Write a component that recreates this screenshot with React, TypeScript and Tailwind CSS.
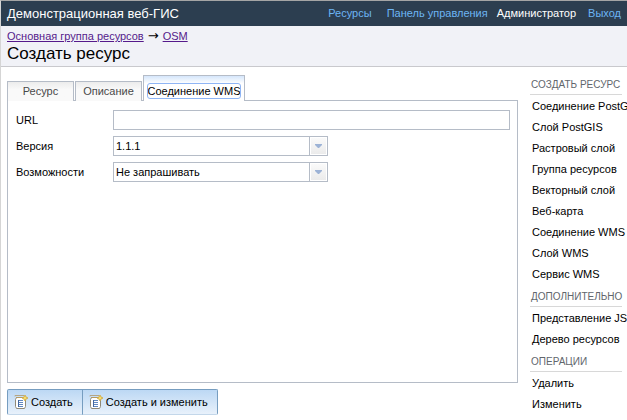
import React, { useState } from "react";

const sections = [
  {
    title: "Создать ресурс",
    items: [
      "Соединение PostGIS",
      "Слой PostGIS",
      "Растровый слой",
      "Группа ресурсов",
      "Векторный слой",
      "Веб-карта",
      "Соединение WMS",
      "Слой WMS",
      "Сервис WMS",
    ],
  },
  { title: "Дополнительно", items: ["Представление JSON", "Дерево ресурсов"] },
  { title: "Операции", items: ["Удалить", "Изменить"] },
];

function NewIcon() {
  return (
    <svg width="14" height="16" viewBox="0 0 14 16" aria-hidden="true" className="shrink-0">
      <path d="M1 2.500V1.500h9" stroke="#b5a684" fill="none" />
      <path d="M2.500 3.500h8l1 2v7l-1 2h-8l-1-2v-7z" fill="#fff" stroke="#8f8877" />
      <path d="M2 3.500h8" stroke="#b59a62" />
      <path d="M4 6.500h5M4 8.500h5M4 10.500h5M4 12.500h5" stroke="#6187c0" />
      <path d="M4.500 6v7" stroke="#44689f" />
      <path d="M11 1l1 2 2 1-2 1-1 2-1-2-2-1 2-1z" fill="#f7dc6d" stroke="#cda63c" strokeWidth=".8" />
    </svg>
  );
}

function SelectRow({ id, label, options }: { id: string; label: string; options: string[] }) {
  return (
    <div className="flex h-5 items-center">
      <label htmlFor={id} className="w-[97px] shrink-0">{label}</label>
      <div className="relative h-5 w-[215px]">
        <select id={id} className="h-full w-full appearance-none border border-[#b5bcc7] bg-white pr-5 pl-[2px] text-black outline-none">
          {options.map((o) => <option key={o}>{o}</option>)}
        </select>
        <span className="pointer-events-none absolute top-0 right-0 flex h-5 w-[19px] items-center justify-center border border-[#b5bcc7] bg-white p-px">
          <span className="flex h-full w-full items-center justify-center bg-linear-to-b from-[#fafafa] to-[#ebebeb]">
            <svg width="7" height="4" viewBox="0 0 7 4" aria-hidden="true">
              <path d="M0 0h7v1L4 4H3L0 1z" fill="#9db3d6" />
            </svg>
          </span>
        </span>
      </div>
    </div>
  );
}

export default function App() {
  const [url, setUrl] = useState("");
  const tab = "flex items-center justify-center border border-b-0 border-[#b5bcc7]";
  const idle = `${tab} mr-px h-5 w-[67px] bg-linear-to-b from-[#ececec] to-[#f9f9f9] to-40% text-[#494949]`;
  const action = "flex h-[26px] items-center gap-[3px] border border-[#769dc0] border-b-[#c3d7ea] bg-linear-to-b from-[#bcd8f4] to-[#e8f1fb] pr-[9px] pl-[6px]";
  return (
    <div className="min-h-screen overflow-hidden border-t border-l border-t-[#a5a5a5] border-l-[#d5d5d5] bg-white font-['Liberation_Sans',Arial,sans-serif] text-[11px] text-black">
      <header className="flex h-[25px] items-center justify-between bg-[#2c3e50] px-[6px] text-white">
        <div className="text-[13px]">Демонстрационная веб-ГИС</div>
        <nav className="flex items-center text-[#6cb5f4]">
          <a href="#resources" className="mr-[15px]">Ресурсы</a>
          <a href="#panel" className="mr-[9px]">Панель управления</a>
          <span className="mr-3 text-white">Администратор</span>
          <a href="#logout">Выход</a>
        </nav>
      </header>
      <div className="h-[41px] border-b border-[#c9c9cd] bg-[#f1f2f7] px-[6px] pt-1">
        <div className="flex items-center gap-1 leading-3">
          <a href="#group" className="text-[#551a8b] underline">Основная группа ресурсов</a>
          <span className="font-['DejaVu_Sans',sans-serif] text-[13px]">→</span>
          <a href="#osm" className="text-[#551a8b] underline">OSM</a>
        </div>
        <h1 className="text-[17px] leading-6">Создать ресурс</h1>
      </div>
      <div className="flex">
        <main className="min-w-0 flex-1 pt-2 pl-[6px]">
          <div role="tablist" className="relative -mb-px flex items-end">
            <button role="tab" className={idle}>Ресурс</button>
            <button role="tab" className={idle}>Описание</button>
            <button role="tab" aria-selected="true" className={`${tab} h-[26px] w-[102px] bg-linear-to-b from-[#d5e6fb] to-white to-30% pt-1`}>
              <span className="rounded-xs leading-[14px] whitespace-nowrap outline-1 outline-[#8fb5f5]">Соединение WMS</span>
            </button>
          </div>
          <form className="flex h-[283px] flex-col gap-[6px] border border-[#b5bcc7] pt-[9px] pr-[7px] pl-2">
            <div className="flex h-5 items-center">
              <label htmlFor="url" className="w-[97px] shrink-0">URL</label>
              <input id="url" value={url} onChange={(e) => setUrl(e.target.value)} className="h-5 min-w-0 flex-1 border border-[#b5bcc7] px-1 outline-none" />
            </div>
            <SelectRow id="version" label="Версия" options={["1.1.1"]} />
            <SelectRow id="caps" label="Возможности" options={["Не запрашивать", "Запросить"]} />
          </form>
          <div className="mt-[6px] flex">
            <button className={`${action} rounded-l-xs`}><NewIcon />Создать</button>
            <button className={`${action} -ml-px rounded-r-xs`}><NewIcon />Создать и изменить</button>
          </div>
        </main>
        <aside className="ml-3 w-[97px] shrink-0 pt-[6px] pr-[5px] whitespace-nowrap">
          {sections.map((s) => (
            <section key={s.title}>
              <h2 className="mb-px h-[22px] border-b border-[#d8d8d8] pl-px text-[10px] leading-[23px] text-[#61666c] uppercase">{s.title}</h2>
              <ul>
                {s.items.map((i) => (
                  <li key={i} className="h-[21px] pl-[2px] leading-[21px]"><a href="#item">{i}</a></li>
                ))}
              </ul>
            </section>
          ))}
        </aside>
      </div>
    </div>
  );
}
